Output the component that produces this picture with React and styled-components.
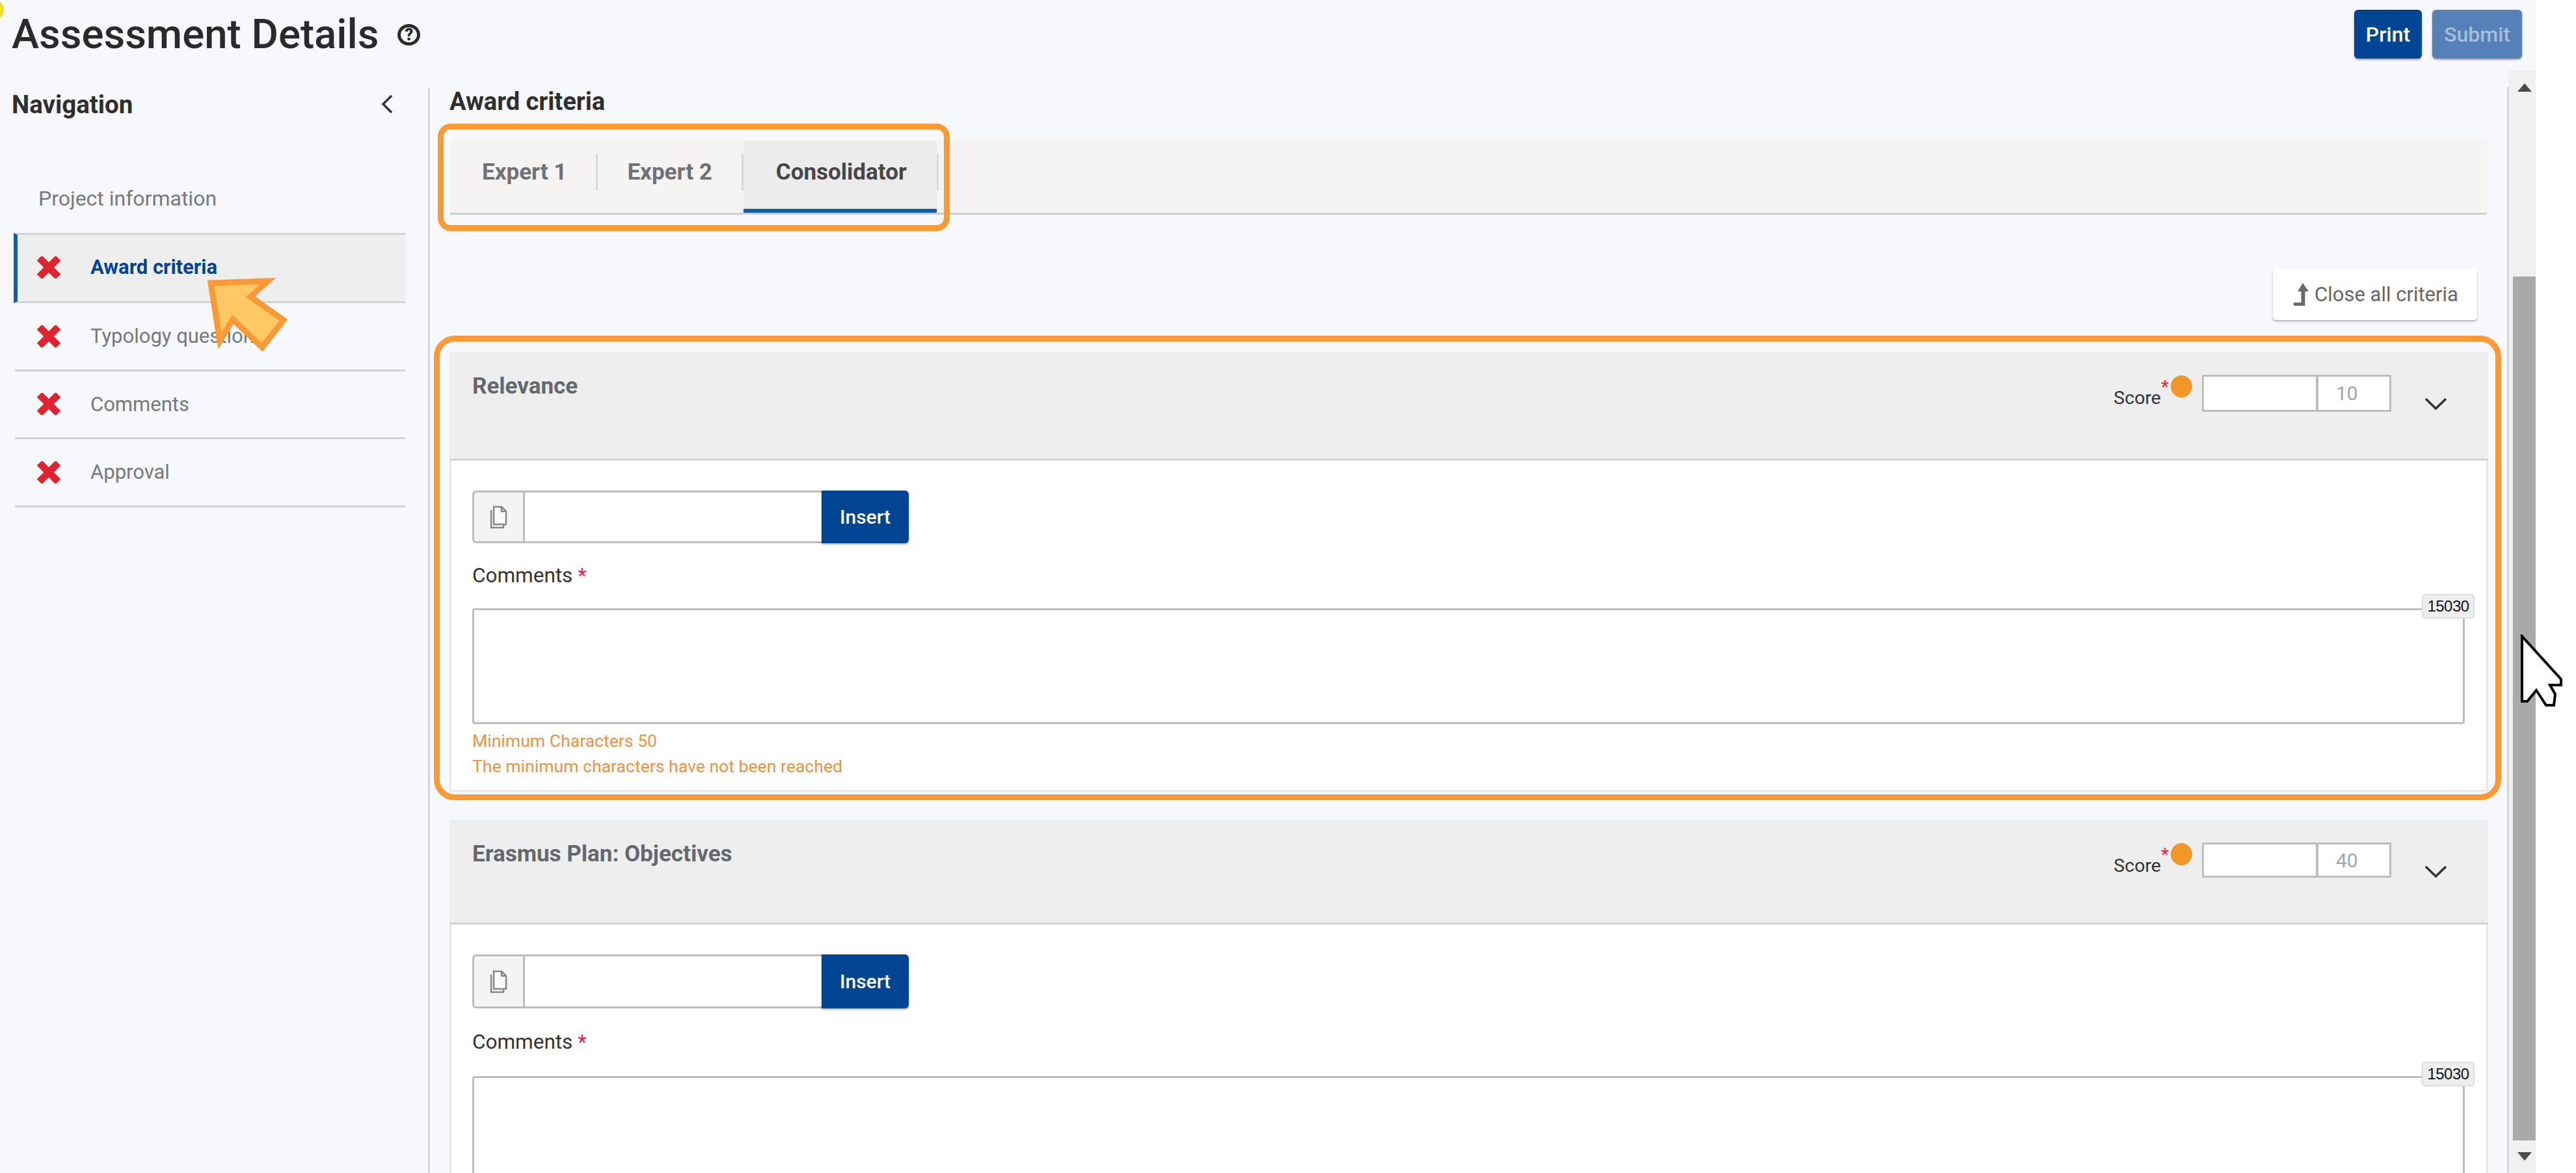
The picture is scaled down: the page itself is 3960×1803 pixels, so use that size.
import React from 'react';
import styled, { createGlobalStyle, css } from 'styled-components';

const GlobalStyle = createGlobalStyle`
    html, body {
        margin: 0;
        padding: 0;
        background: #fff;
    }
    * {
        box-sizing: border-box;
    }
`;

const orange = '#f99a35';
const blue = '#004494';

const Page = styled.div`
    position: relative;
    width: 3960px;
    height: 1803px;
    overflow: hidden;
    background: #fff;
    font-family: Roboto, "Liberation Sans", sans-serif;
`;

const Screen = styled.div`
    width: 3898px;
    height: 1803px;
    background: #f6f8fc;
    display: flex;
    flex-direction: column;
`;

const TopBar = styled.header`
    height: 108px;
    flex: none;
    display: flex;
    justify-content: space-between;
    align-items: flex-start;
    padding: 15px 21px 0 18px;
`;

const TitleRow = styled.div`
    display: flex;
    align-items: center;
    gap: 29px;
    padding-top: 2px;
`;

const Title = styled.h1`
    margin: 0;
    font-size: 63.5px;
    line-height: 72px;
    font-weight: 500;
    color: #2a2a2a;
`;

const HelpIcon = styled.span`
    width: 35px;
    height: 33px;
    border: 5px solid #2b2b2b;
    border-radius: 50%;
    display: flex;
    align-items: center;
    justify-content: center;
    font-size: 25px;
    font-weight: 900;
    color: #2b2b2b;
`;

const Actions = styled.div`
    display: flex;
    gap: 16px;
`;

const Button = styled.button`
    height: 75px;
    padding: 0 18px;
    border: 0;
    border-radius: 6px;
    font: 500 32px Roboto, sans-serif;
    color: #fff;
    background: ${blue};
    box-shadow: 0 2px 3px rgba(0, 0, 0, 0.35);

    ${props => props.$disabled && css`
        background: #5580b8;
        color: #a6bddb;
    `}
`;

const Body = styled.div`
    flex: 1;
    min-height: 0;
    display: flex;
`;

const Sidebar = styled.aside`
    width: 661px;
    flex: none;
    margin-top: 27px;
    border-right: 3px solid #d5d6d9;
`;

const NavHead = styled.div`
    display: flex;
    justify-content: space-between;
    align-items: center;
    padding: 7px 53px 0 18px;
    height: 43px;
`;

const NavTitle = styled.h2`
    margin: 0;
    font-size: 38.5px;
    font-weight: 700;
    color: #2e2e2e;
`;

const NavList = styled.ul`
    list-style: none;
    margin: 76px 35px 0 23px;
    padding: 0;
`;

const NavRow = styled.li`
    height: 104.5px;
    display: flex;
    align-items: center;
    gap: 46px;
    padding-left: 34px;
    border-bottom: 3px solid #d2d3d5;
    font-size: 31px;
    color: #77797d;

    ${props => props.$plain && css`
        height: 104px;
        border-bottom: 0;
        padding: 0 0 3px 36px;
        font-size: 32px;
    `}

    ${props => props.$active && css`
        height: 108px;
        margin-left: -2px;
        padding: 0 0 3px 30px;
        border-top: 3px solid #d2d3d5;
        border-left: 6px solid #0e5fa8;
        background: #eeeeee;
        color: ${blue};
        font-weight: 700;
    `}
`;

const Main = styled.main`
    flex: 1;
    min-width: 0;
    overflow: hidden;
    padding: 30px 31px 0 30px;
`;

const SectionTitle = styled.h2`
    margin: 0;
    font-size: 38px;
    line-height: 36px;
    font-weight: 700;
    color: #2e2e2e;
`;

const TabStrip = styled.div`
    position: relative;
    height: 114px;
    margin: 42px 2px 0 1px;
    padding-left: 4px;
    background: #f5f4f3;
    border-bottom: 3px solid #cfcfcf;
    display: flex;
    align-items: center;
`;

const Tab = styled.div`
    height: 100%;
    padding: 0 45px 14px 45px;
    display: flex;
    align-items: center;
    font-size: 35px;
    font-weight: 700;
    color: #6e7176;

    ${props => props.$active && css`
        padding: 0 46px 8px 50px;
        background: #ececec;
        border-bottom: 6px solid #0e5fa8;
        color: #45474b;
    `}
`;

const TabDivider = styled.span`
    width: 3px;
    height: 56px;
    margin-bottom: 14px;
    background: #d9d9d9;
`;

const Highlight = styled.div`
    position: absolute;
    border: 9px solid ${orange};
    pointer-events: none;

    ${props => props.$tabs && css`
        left: -19px;
        top: -26px;
        width: 787px;
        height: 165px;
        border-radius: 20px;
    `}

    ${props => props.$card && css`
        left: -27px;
        top: -28px;
        right: -23px;
        bottom: -16px;
        border-radius: 32px;
    `}
`;

const CloseRow = styled.div`
    display: flex;
    justify-content: flex-end;
    margin-top: 83px;
    padding-right: 17px;
`;

const CloseButton = styled.button`
    height: 79px;
    width: 314px;
    border: 0;
    border-radius: 5px;
    background: #fff;
    box-shadow: 0 2px 3px rgba(0, 0, 0, 0.3);
    display: flex;
    align-items: center;
    gap: 8px;
    padding: 0 0 0 31px;
    font: 400 31px Roboto, sans-serif;
    color: #666;
`;

const Card = styled.section`
    position: relative;
    margin-top: ${props => props.$first ? 49 : 43}px;
    border: 3px solid #e6e8ec;
    border-radius: 5px 5px 0 0;
    background: #fff;
`;

const CardHead = styled.div`
    height: ${props => props.$height}px;
    margin: -3px -3px 0;
    padding: 33px 63px 0 35px;
    background: #eeeeee;
    border-bottom: 3px solid #d2d3d5;
    display: flex;
    justify-content: space-between;
    align-items: flex-start;
`;

const CardTitle = styled.h3`
    margin: 2px 0 0;
    font-size: 35px;
    line-height: 36px;
    font-weight: 700;
    color: #65686d;
`;

const ScoreArea = styled.div`
    display: flex;
    align-items: flex-start;
`;

const ScoreLabel = styled.span`
    margin-top: 20px;
    font-size: 28.5px;
    line-height: 36px;
    color: #333;
`;

const Star = styled.span`
    color: #f0233a;
`;

const ScoreStar = styled(Star)`
    font-size: 28px;
    line-height: 30px;
    margin-top: 6px;
`;

const Dot = styled.span`
    width: 33px;
    height: 34px;
    margin: 3px 15px 0 3px;
    border-radius: 50%;
    background: #f2962a;
`;

const ScoreBox = styled.div`
    width: 291px;
    height: ${props => props.$height}px;
    margin-top: 2px;
    display: flex;
    background: #fff;
    border: 3px solid #bdbdbd;
`;

const ScoreInput = styled.input`
    width: 176px;
    border: 0;
    border-right: 4px solid #bdbdbd;
    padding: 0;
    background: #fff;
`;

const ScoreMax = styled.span`
    flex: 1;
    display: flex;
    align-items: center;
    padding-left: 27px;
    font-size: 30px;
    color: #a5a5a5;
`;

const ChevronWrap = styled.span`
    display: block;
    margin: 37px 0 0 51px;
    line-height: 0;
`;

const CardBody = styled.div`
    padding: 46px 33px 17px 32px;
`;

const AttachRow = styled.div`
    display: flex;
    width: 671px;
    height: ${props => props.$height}px;
`;

const AttachIcon = styled.span`
    width: 81px;
    display: flex;
    align-items: center;
    justify-content: center;
    background: #f4f4f4;
    border: 3px solid #bdbdbd;
    border-radius: 6px 0 0 6px;
`;

const AttachInput = styled.input`
    flex: 1;
    min-width: 0;
    border: 3px solid #bdbdbd;
    border-left: 0;
    border-right: 0;
    background: #fff;
    padding: 0;
`;

const InsertButton = styled.button`
    width: 134px;
    border: 0;
    border-radius: 0 6px 6px 0;
    background: ${blue};
    box-shadow: 0 2px 3px rgba(0, 0, 0, 0.3);
    font: 500 30px Roboto, sans-serif;
    color: #fff;
`;

const FieldLabel = styled.label`
    display: block;
    margin: ${props => props.$top}px 0 ${props => props.$gap}px;
    font-size: 31.5px;
    line-height: 36px;
    color: #333;
`;

const TextareaWrap = styled.div`
    position: relative;
`;

const CommentBox = styled.textarea`
    display: block;
    width: 100%;
    height: 178px;
    border: 3px solid #bdbdbd;
    border-radius: 4px;
    resize: none;
    background: #fff;
`;

const Counter = styled.span`
    position: absolute;
    right: -15px;
    top: -22px;
    width: 81px;
    height: 38px;
    display: flex;
    align-items: center;
    justify-content: center;
    border: 2px solid #dedede;
    border-radius: 5px;
    background: #eeeeee;
    font: 24px "Liberation Sans", sans-serif;
    letter-spacing: -0.5px;
    color: #111;
`;

const Notes = styled.div`
    margin-top: 6px;
    font-size: 26.6px;
    line-height: 39px;
    color: #ee9145;
`;

const Scrollbar = styled.div`
    position: relative;
    width: 42px;
    flex: none;
    background: #f0f0f0;
    padding-left: 7px;
    display: flex;
    flex-direction: column;
    align-items: center;

    &::before {
        content: '';
        position: absolute;
        left: -2px;
        top: 26px;
        bottom: 0;
        width: 3px;
        background: #d5d6d9;
    }
`;

const ScrollArrow = styled.span`
    height: ${props => props.$height}px;
    flex: none;
    padding-top: ${props => props.$pad}px;
    line-height: 0;
`;

const ScrollThumb = styled.div`
    width: 100%;
    height: 1328px;
    flex: none;
    background: #a9a9a9;
`;

const Marker = styled.svg`
    position: absolute;
    left: ${props => props.$x}px;
    top: ${props => props.$y}px;
`;

const YellowSpot = styled.span`
    position: absolute;
    left: -12px;
    top: 2px;
    width: 18px;
    height: 26px;
    border-radius: 50%;
    background: #f5dc2a;
`;

const XIcon = () => (
    <svg width="36" height="34" viewBox="0 0 36 34">
        <path d="M7.5 6.5L28.5 27.5M28.5 6.5L7.5 27.5" stroke="#dd2430" strokeWidth="11" strokeLinecap="square" />
    </svg>
);

const ChevronLeft = () => (
    <svg width="20" height="30" viewBox="0 0 20 30">
        <path d="M17 2L4 15L17 28" fill="none" stroke="#333" strokeWidth="3.5" />
    </svg>
);

const ChevronDown = () => (
    <svg width="35" height="20" viewBox="0 0 35 20">
        <path d="M2 2L17.5 17L33 2" fill="none" stroke="#333" strokeWidth="3.5" />
    </svg>
);

const LevelUp = () => (
    <svg width="25" height="35" viewBox="0 0 25 35">
        <path d="M15 0L24 13H18.5V35H1V30H12.5V13H7Z" fill="#6a6a6a" />
    </svg>
);

const CopyIcon = () => (
    <svg width="27" height="36" viewBox="0 0 27 36" fill="none" stroke="#85878d" strokeWidth="2.5">
        <path d="M2 7V34H21V29" />
        <path d="M6 29V2H18L25 9V29Z" fill="#fafafa" />
        <path d="M18 2V9H25" />
    </svg>
);

const ScrollTriangle = ({ down }) => (
    <svg width="22" height="13" viewBox="0 0 22 13">
        <path d={down ? 'M0 0H22L11 13Z' : 'M0 13H22L11 0Z'} fill="#4a4a4a" />
    </svg>
);

const navItems = ['Typology questions', 'Comments', 'Approval'];

const CriterionCard = ({ first, title, max, headHeight, boxHeight, attachHeight, labelTop, labelGap, children }) => (
    <Card $first={first}>
        {first && <Highlight $card />}
        <CardHead $height={headHeight}>
            <CardTitle>{title}</CardTitle>
            <ScoreArea>
                <ScoreLabel>Score</ScoreLabel>
                <ScoreStar>*</ScoreStar>
                <Dot />
                <ScoreBox $height={boxHeight}>
                    <ScoreInput readOnly />
                    <ScoreMax>{max}</ScoreMax>
                </ScoreBox>
                <ChevronWrap><ChevronDown /></ChevronWrap>
            </ScoreArea>
        </CardHead>
        <CardBody>
            <AttachRow $height={attachHeight}>
                <AttachIcon><CopyIcon /></AttachIcon>
                <AttachInput readOnly />
                <InsertButton>Insert</InsertButton>
            </AttachRow>
            <FieldLabel $top={labelTop} $gap={labelGap}>Comments <Star>*</Star></FieldLabel>
            <TextareaWrap>
                <CommentBox readOnly />
                <Counter>15030</Counter>
            </TextareaWrap>
            {children}
        </CardBody>
    </Card>
);

const App = () => (
    <Page>
        <GlobalStyle />
        <Screen>
            <TopBar>
                <TitleRow>
                    <Title>Assessment Details</Title>
                    <HelpIcon>?</HelpIcon>
                </TitleRow>
                <Actions>
                    <Button>Print</Button>
                    <Button $disabled>Submit</Button>
                </Actions>
            </TopBar>
            <Body>
                <Sidebar>
                    <NavHead>
                        <NavTitle>Navigation</NavTitle>
                        <ChevronLeft />
                    </NavHead>
                    <NavList>
                        <NavRow $plain>Project information</NavRow>
                        <NavRow $active><XIcon />Award criteria</NavRow>
                        {navItems.map(item => (
                            <NavRow key={item}><XIcon />{item}</NavRow>
                        ))}
                    </NavList>
                </Sidebar>
                <Main>
                    <SectionTitle>Award criteria</SectionTitle>
                    <TabStrip>
                        <Tab>Expert 1</Tab>
                        <TabDivider />
                        <Tab>Expert 2</Tab>
                        <TabDivider />
                        <Tab $active>Consolidator</Tab>
                        <TabDivider />
                        <Highlight $tabs />
                    </TabStrip>
                    <CloseRow>
                        <CloseButton><LevelUp />Close all criteria</CloseButton>
                    </CloseRow>
                    <CriterionCard first title="Relevance" max="10" headHeight={167} boxHeight={57} attachHeight={81} labelTop={32} labelGap={32}>
                        <Notes>
                            Minimum Characters 50<br />
                            The minimum characters have not been reached
                        </Notes>
                    </CriterionCard>
                    <CriterionCard title="Erasmus Plan: Objectives" max="40" headHeight={161} boxHeight={54} attachHeight={83} labelTop={34} labelGap={34} />
                </Main>
                <Scrollbar>
                    <ScrollArrow $height={317} $pad={20}><ScrollTriangle /></ScrollArrow>
                    <ScrollThumb />
                    <ScrollArrow $height={50} $pad={18}><ScrollTriangle down /></ScrollArrow>
                </Scrollbar>
            </Body>
        </Screen>
        <YellowSpot />
        <Marker $x={312} $y={420} width="140" height="130" viewBox="0 0 140 130">
            <path d="M12 15L100 12L73 36L124 72L91 114L46 71L26 104Z" fill="#ffc864" stroke={orange} strokeWidth="9" />
        </Marker>
        <Marker $x={3868} $y={975} width="75" height="112" viewBox="0 0 75 112">
            <path d="M9 3V103H17L31 86L46 109H58L60 92L52 78H69V69Z" fill="#fff" stroke="#000" strokeWidth="4" />
        </Marker>
    </Page>
);

export default App;
